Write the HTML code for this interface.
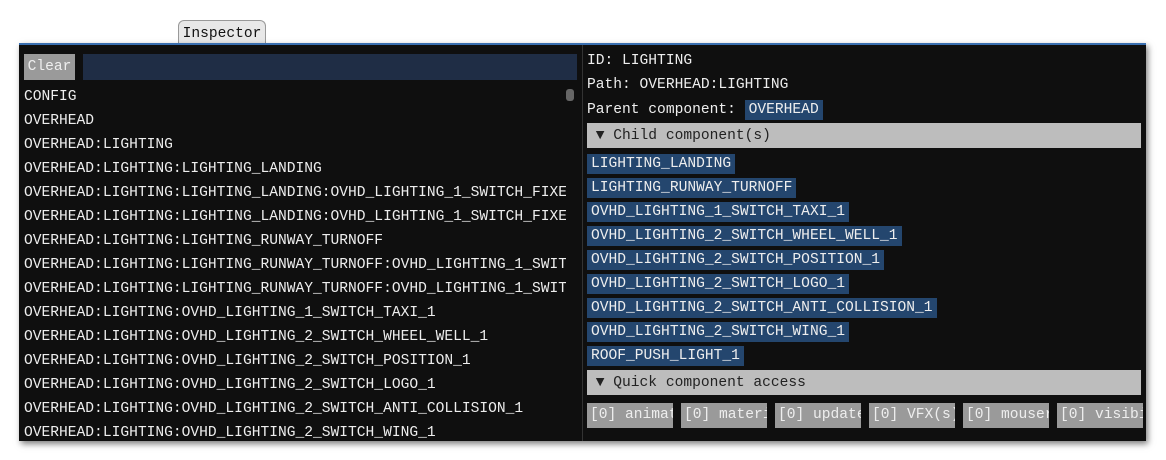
<!DOCTYPE html>
<html><head><style>
body{margin:0;width:1166px;height:460px;background:#fff;position:relative;overflow:hidden;font-family:"Liberation Mono",monospace;font-size:14.6px;}
.tab{position:absolute;left:178px;top:20px;width:86px;height:23px;background:#e8e8e8;border:1px solid #999;border-bottom:none;border-radius:6px 6px 0 0;color:#111;line-height:26px;text-align:center;}
.win{position:absolute;left:19px;top:43px;width:1127px;height:396px;background:#0f0f0f;border-top:2px solid #3a6fb0;box-shadow:2px 3px 6px rgba(0,0,0,.5);overflow:hidden;color:#eee;}
.a{position:absolute;white-space:nowrap;}
.clear{left:5px;top:9px;width:51px;height:26px;background:#9a9a9a;color:#eee;line-height:26px;text-align:center;}
.inp{left:64px;top:9px;width:494px;height:26px;background:#1f2d45;}
.list{left:5px;top:40px;width:542px;overflow:hidden;}
.list div{height:24px;line-height:24px;white-space:nowrap;}
.sb{left:547px;top:44px;width:8px;height:12px;background:#666;border-radius:3px;}
.div{left:563px;top:0;width:1px;height:397px;background:#333;}
.r{left:568px;}
.tag{background:#24466e;padding:0 4px;height:20px;line-height:20px;display:inline-block;}
.hdr{position:absolute;left:568px;width:554px;height:25px;background:#bdbdbd;color:#222;line-height:26px;}
.btn{position:absolute;top:358px;width:86px;height:25px;background:#9a9a9a;color:#eee;line-height:25px;overflow:hidden;white-space:nowrap;padding-left:3px;box-sizing:border-box;}
</style></head><body>
<div class="tab">Inspector</div>
<div class="win">
<div class="a clear">Clear</div><div class="a inp"></div>
<div class="a list">
<div>CONFIG</div><div>OVERHEAD</div><div>OVERHEAD:LIGHTING</div><div>OVERHEAD:LIGHTING:LIGHTING_LANDING</div>
<div>OVERHEAD:LIGHTING:LIGHTING_LANDING:OVHD_LIGHTING_1_SWITCH_FIXED</div>
<div>OVERHEAD:LIGHTING:LIGHTING_LANDING:OVHD_LIGHTING_1_SWITCH_FIXED</div>
<div>OVERHEAD:LIGHTING:LIGHTING_RUNWAY_TURNOFF</div>
<div>OVERHEAD:LIGHTING:LIGHTING_RUNWAY_TURNOFF:OVHD_LIGHTING_1_SWITCH</div>
<div>OVERHEAD:LIGHTING:LIGHTING_RUNWAY_TURNOFF:OVHD_LIGHTING_1_SWITCH</div>
<div>OVERHEAD:LIGHTING:OVHD_LIGHTING_1_SWITCH_TAXI_1</div>
<div>OVERHEAD:LIGHTING:OVHD_LIGHTING_2_SWITCH_WHEEL_WELL_1</div>
<div>OVERHEAD:LIGHTING:OVHD_LIGHTING_2_SWITCH_POSITION_1</div>
<div>OVERHEAD:LIGHTING:OVHD_LIGHTING_2_SWITCH_LOGO_1</div>
<div>OVERHEAD:LIGHTING:OVHD_LIGHTING_2_SWITCH_ANTI_COLLISION_1</div>
<div>OVERHEAD:LIGHTING:OVHD_LIGHTING_2_SWITCH_WING_1</div>
</div>
<div class="a sb"></div>
<div class="a div"></div>
<div class="a r" style="top:8px">ID: LIGHTING</div>
<div class="a r" style="top:32px">Path: OVERHEAD:LIGHTING</div>
<div class="a r" style="top:55px">Parent component: <span class="tag">OVERHEAD</span></div>
<div class="hdr" style="top:78px">&nbsp;▼ Child component(s)</div>
<div class="a r" style="top:109px"><span class="tag">LIGHTING_LANDING</span></div>
<div class="a r" style="top:133px"><span class="tag">LIGHTING_RUNWAY_TURNOFF</span></div>
<div class="a r" style="top:157px"><span class="tag">OVHD_LIGHTING_1_SWITCH_TAXI_1</span></div>
<div class="a r" style="top:181px"><span class="tag">OVHD_LIGHTING_2_SWITCH_WHEEL_WELL_1</span></div>
<div class="a r" style="top:205px"><span class="tag">OVHD_LIGHTING_2_SWITCH_POSITION_1</span></div>
<div class="a r" style="top:229px"><span class="tag">OVHD_LIGHTING_2_SWITCH_LOGO_1</span></div>
<div class="a r" style="top:253px"><span class="tag">OVHD_LIGHTING_2_SWITCH_ANTI_COLLISION_1</span></div>
<div class="a r" style="top:277px"><span class="tag">OVHD_LIGHTING_2_SWITCH_WING_1</span></div>
<div class="a r" style="top:301px"><span class="tag">ROOF_PUSH_LIGHT_1</span></div>
<div class="hdr" style="top:325px">&nbsp;▼ Quick component access</div>
<div class="btn" style="left:568px">[0] animations</div>
<div class="btn" style="left:662px">[0] materials</div>
<div class="btn" style="left:756px">[0] updates</div>
<div class="btn" style="left:850px">[0] VFX(s)</div>
<div class="btn" style="left:944px">[0] mouserect</div>
<div class="btn" style="left:1038px">[0] visibility</div>
</div>
</body></html>
